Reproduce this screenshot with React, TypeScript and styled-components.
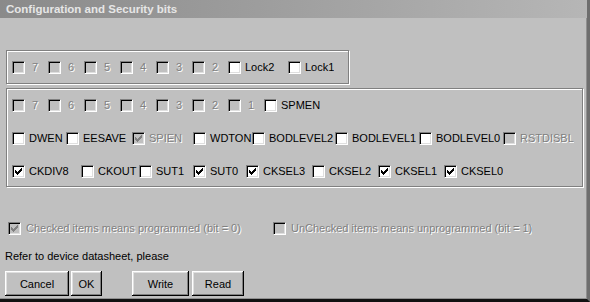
import React from "react";
import styled, { createGlobalStyle } from "styled-components";

const Global = createGlobalStyle`
  html, body { margin: 0; padding: 0; background: #c0c0c0; }
  body { font-family: "Liberation Sans", Arial, sans-serif; font-size: 11px; }
`;

const Window = styled.div`
  width: 590px;
  height: 302px;
  box-sizing: border-box;
  background: #c0c0c0;
  border-right: 3px solid #6e6e6e;
  border-bottom: 3px solid #111;
  box-shadow: inset -1px -1px 0 #909090;
  display: flex;
  flex-direction: column;
  overflow: hidden;
`;

const TitleBar = styled.div`
  height: 18px;
  flex: none;
  background: linear-gradient(90deg, #8a8a8a 0%, #a4a4a4 60%, #b6b6b6 100%);
  color: #e6e6e6;
  font-weight: bold;
  font-size: 11.5px;
  line-height: 18px;
  padding-left: 6px;
  white-space: nowrap;
`;

const Body = styled.div`
  display: flex;
  flex-direction: column;
  align-items: flex-start;
  padding-left: 5px;
`;

const GroupBox = styled.div<{ $w: number; $h: number; $top: number }>`
  margin-left: 1px;
  margin-top: ${(p) => p.$top}px;
  width: ${(p) => p.$w}px;
  height: ${(p) => p.$h}px;
  box-sizing: border-box;
  border: 1px solid #808080;
  box-shadow: inset 1px 1px 0 #fff, 1px 1px 0 #fff;
  padding: 9px 0 0 5px;
  display: flex;
  flex-direction: column;
  gap: 18px;
`;

const Row = styled.div`
  display: flex;
  align-items: center;
  height: 15px;
`;

const Item = styled.div<{ $w?: number; $gap?: number }>`
  display: flex;
  align-items: center;
  gap: ${(p) => p.$gap ?? 4}px;
  flex: none;
  ${(p) => (p.$w ? `width: ${p.$w}px;` : "")}
  overflow: hidden;
  white-space: nowrap;
  height: 15px;
`;

const Box = styled.span<{ $disabled?: boolean }>`
  flex: none;
  width: 13px;
  height: 13px;
  box-sizing: border-box;
  border-top: 1px solid #808080;
  border-left: 1px solid #808080;
  border-right: 1px solid #fff;
  border-bottom: 1px solid #fff;
  background: ${(p) => (p.$disabled ? "#c0c0c0" : "#fff")};
  box-shadow: inset 1px 1px 0 #000, inset -1px -1px 0 #dfdfdf;
  display: flex;
  align-items: center;
  justify-content: center;
`;

const Label = styled.span<{ $disabled?: boolean; $indent?: number }>`
  color: ${(p) => (p.$disabled ? "#808080" : "#000")};
  text-shadow: ${(p) => (p.$disabled ? "1px 1px 0 #fff" : "none")};
  line-height: 15px;
  padding-left: ${(p) => p.$indent ?? 0}px;
`;

const NoteRow = styled.div`
  display: flex;
  align-items: center;
  height: 15px;
  margin-top: 34px;
  margin-left: 3px;
`;

const Hint = styled.div`
  margin-top: 14px;
  line-height: 13px;
  color: #000;
`;

const ButtonRow = styled.div`
  display: flex;
  margin-top: 8px;
`;

const Button = styled.button<{ $w: number; $ml?: number }>`
  width: ${(p) => p.$w}px;
  height: 25px;
  margin-left: ${(p) => p.$ml ?? 0}px;
  padding: 0;
  border: none;
  background: #c0c0c0;
  font-family: "Liberation Sans", Arial, sans-serif;
  font-size: 11px;
  color: #000;
  box-shadow: inset -1px -1px 0 #000, inset 1px 1px 0 #fff,
    inset -2px -2px 0 #808080, inset 2px 2px 0 #dfdfdf;
`;

const Check: React.FC<{ color: string }> = ({ color }) => (
  <svg width="7" height="7" viewBox="0 0 7 7" shapeRendering="crispEdges">
    <g fill={color}>
      <rect x="6" y="0" width="1" height="1" />
      <rect x="5" y="1" width="2" height="1" />
      <rect x="0" y="2" width="1" height="1" />
      <rect x="4" y="2" width="3" height="1" />
      <rect x="0" y="3" width="2" height="1" />
      <rect x="3" y="3" width="3" height="1" />
      <rect x="0" y="4" width="5" height="1" />
      <rect x="1" y="5" width="3" height="1" />
      <rect x="2" y="6" width="1" height="1" />
    </g>
  </svg>
);

type Bit = { label: string; w?: number; disabled?: boolean; checked?: boolean; indent?: number };

const CheckItem: React.FC<Bit & { gap?: number }> = ({ label, w, disabled, checked, gap, indent }) => (
  <Item $w={w} $gap={gap}>
    <Box $disabled={disabled}>{checked && <Check color={disabled ? "#808080" : "#000"} />}</Box>
    <Label $disabled={disabled} $indent={indent}>
      {label}
    </Label>
  </Item>
);

const digits = (from: number, to: number): Bit[] => {
  const out: Bit[] = [];
  for (let i = from; i >= to; i--) out.push({ label: String(i), w: 36, disabled: true, indent: 3 });
  return out;
};

const lockRow: Bit[] = [...digits(7, 2), { label: "Lock2", w: 60 }, { label: "Lock1" }];

const fuseRows: Bit[][] = [
  [...digits(7, 1), { label: "SPMEN" }],
  [
    { label: "DWEN", w: 54 },
    { label: "EESAVE", w: 66 },
    { label: "SPIEN", w: 61, disabled: true, checked: true },
    { label: "WDTON", w: 59 },
    { label: "BODLEVEL2", w: 83 },
    { label: "BODLEVEL1", w: 84 },
    { label: "BODLEVEL0", w: 84 },
    { label: "RSTDISBL", disabled: true },
  ],
  [
    { label: "CKDIV8", w: 69, checked: true },
    { label: "CKOUT", w: 58 },
    { label: "SUT1", w: 54 },
    { label: "SUT0", w: 53, checked: true },
    { label: "CKSEL3", w: 66, checked: true },
    { label: "CKSEL2", w: 66 },
    { label: "CKSEL1", w: 66, checked: true },
    { label: "CKSEL0", checked: true },
  ],
];

export default function App() {
  return (
    <>
      <Global />
      <Window>
        <TitleBar>Configuration and Security bits</TitleBar>
        <Body>
          <GroupBox $w={343} $h={34} $top={32}>
            <Row>
              {lockRow.map((b) => (
                <CheckItem key={b.label} {...b} />
              ))}
            </Row>
          </GroupBox>
          <GroupBox $w={577} $h={99} $top={4}>
            {fuseRows.map((row, i) => (
              <Row key={i}>
                {row.map((b) => (
                  <CheckItem key={b.label} {...b} />
                ))}
              </Row>
            ))}
          </GroupBox>
          <NoteRow>
            <CheckItem label="Checked items means programmed (bit = 0)" w={265} gap={5} disabled checked />
            <CheckItem label="UnChecked items means unprogrammed (bit = 1)" gap={5} disabled />
          </NoteRow>
          <Hint>Refer to device datasheet, please</Hint>
          <ButtonRow>
            <Button $w={64}>Cancel</Button>
            <Button $w={31} $ml={2}>OK</Button>
            <Button $w={57} $ml={30}>Write</Button>
            <Button $w={52} $ml={3}>Read</Button>
          </ButtonRow>
        </Body>
      </Window>
    </>
  );
}
